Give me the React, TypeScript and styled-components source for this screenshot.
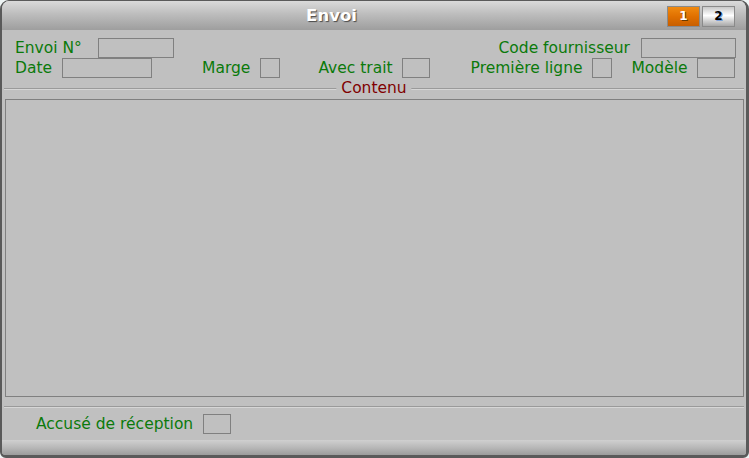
import React from "react";
import styled, { createGlobalStyle } from "styled-components";

const Global = createGlobalStyle`
  html, body {
    margin: 0;
    padding: 0;
    background: #eef4f4;
  }
  body {
    font-family: "DejaVu Sans", Verdana, sans-serif;
  }
`;

const Window = styled.div`
  width: 749px;
  height: 458px;
  box-sizing: border-box;
  display: flex;
  flex-direction: column;
  background: #c0c0c0;
  border: 1px solid #5a5a5a;
  border-right-width: 3px;
  border-bottom-width: 3px;
  border-left-width: 2px;
  border-radius: 9px 9px 6px 6px;
  overflow: hidden;
`;

const TitleBar = styled.div`
  height: 29px;
  flex: none;
  display: flex;
  align-items: center;
  background: linear-gradient(#dadada, #bdbdbd 45%, #9e9e9e);
`;

const Title = styled.div`
  flex: 1;
  text-align: center;
  font-size: 16.5px;
  font-weight: bold;
  color: #ffffff;
  text-shadow: 1px 1px 1px #4a4a4a;
  padding-right: 6px;
`;

const Tabs = styled.div`
  display: flex;
  gap: 2px;
  margin-right: 11px;
  margin-top: 1px;
`;

const Tab = styled.div<{ $active?: boolean }>`
  width: 33px;
  height: 21px;
  box-sizing: border-box;
  display: flex;
  align-items: center;
  justify-content: center;
  font-size: 12px;
  font-weight: bold;
  border: 1px solid #8a8a8a;
  color: ${({ $active }) => ($active ? "#ffffff" : "#000000")};
  text-shadow: ${({ $active }) => ($active ? "1px 1px 0 #6a3a00" : "1px 1px 0 #7aa0d8")};
  background: ${({ $active }) =>
    $active
      ? "linear-gradient(#f08a10, #e07000 50%, #c85e00)"
      : "linear-gradient(#c8c8c8, #ffffff 45%, #d6d6d6 70%, #a8a8a8)"};
`;

const Header = styled.div`
  display: flex;
  flex-direction: column;
  padding: 8px 10px 0 13px;
  height: 50px;
  flex: none;
`;

const Row = styled.div`
  display: flex;
  align-items: center;
  height: 20px;
`;

const Label = styled.span<{ $ml?: number }>`
  font-size: 15.5px;
  color: #0b7a0b;
  white-space: nowrap;
  margin-left: ${({ $ml }) => $ml ?? 0}px;
`;

const Field = styled.div<{ $w: number; $ml: number }>`
  width: ${({ $w }) => $w}px;
  height: 20px;
  box-sizing: border-box;
  border: 1px solid #808080;
  margin-left: ${({ $ml }) => $ml}px;
  flex: none;
`;

const Spacer = styled.div`
  flex: 1;
`;

const Separator = styled.div<{ $mt?: number }>`
  position: relative;
  margin: ${({ $mt }) => $mt ?? 0}px 2px 0;
  height: 0;
  border-top: 1px solid #9a9a9a;
  border-bottom: 1px solid #d6d6d6;
  flex: none;
`;

const SepLabel = styled.span`
  position: absolute;
  left: 50%;
  top: -9px;
  transform: translateX(-50%);
  padding: 0 5px;
  background: #c0c0c0;
  color: #800000;
  font-size: 15.5px;
  line-height: 17px;
`;

const Content = styled.div`
  margin: 9px 2px 0 3px;
  height: 298px;
  box-sizing: border-box;
  border: 1px solid #808080;
  flex: none;
`;

const Footer = styled.div`
  display: flex;
  align-items: center;
  padding-left: 34px;
  height: 32px;
  flex: none;
`;

const BottomBar = styled.div`
  flex: 1;
  background: linear-gradient(#d0d0d0, #b8b8b8 50%, #9c9c9c);
`;

export default function App() {
  return (
    <>
      <Global />
      <Window>
        <TitleBar>
          <Title>Envoi</Title>
          <Tabs>
            <Tab $active>1</Tab>
            <Tab>2</Tab>
          </Tabs>
        </TitleBar>
        <Header>
          <Row>
            <Label>Envoi N°</Label>
            <Field $w={76} $ml={16} />
            <Spacer />
            <Label>Code fournisseur</Label>
            <Field $w={95} $ml={11} />
          </Row>
          <Row>
            <Label>Date</Label>
            <Field $w={90} $ml={10} />
            <Label $ml={50}>Marge</Label>
            <Field $w={20} $ml={10} />
            <Label $ml={38}>Avec trait</Label>
            <Field $w={28} $ml={9} />
            <Label $ml={41}>Première ligne</Label>
            <Field $w={20} $ml={9} />
            <Label $ml={20}>Modèle</Label>
            <Field $w={38} $ml={9} />
          </Row>
        </Header>
        <Separator>
          <SepLabel>Contenu</SepLabel>
        </Separator>
        <Content />
        <Separator $mt={9} />
        <Footer>
          <Label>Accusé de réception</Label>
          <Field $w={28} $ml={10} />
        </Footer>
        <BottomBar />
      </Window>
    </>
  );
}
